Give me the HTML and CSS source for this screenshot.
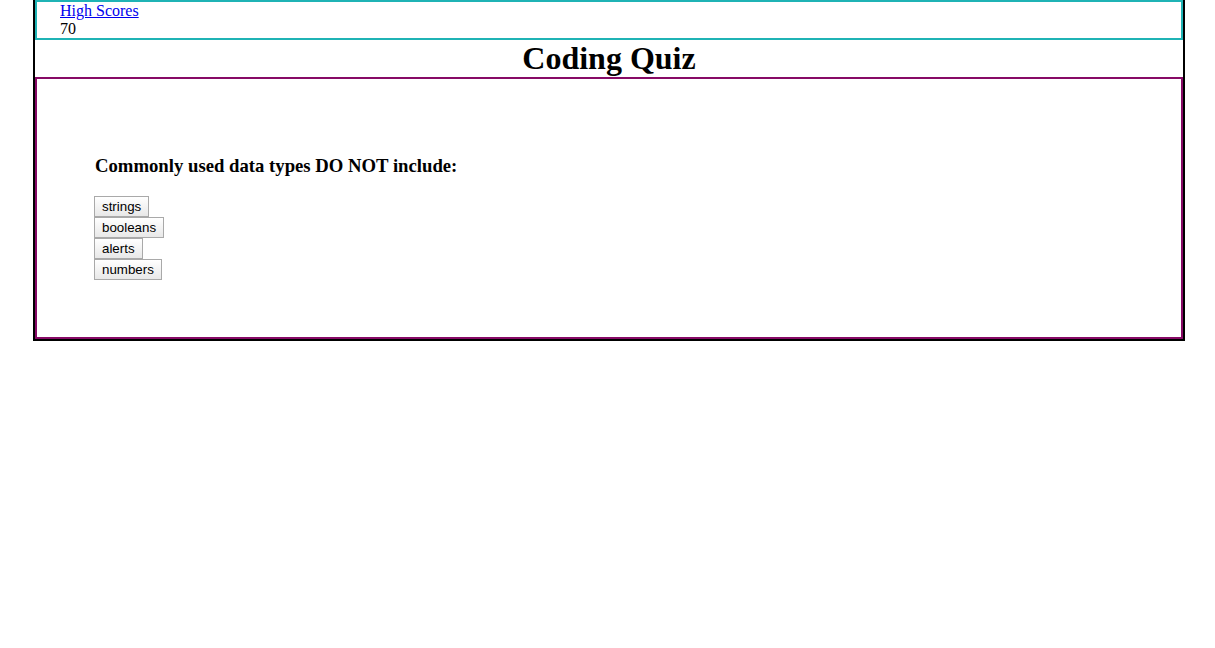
FILE: index.html
```html
<!DOCTYPE html>
<html>
<head>
<meta charset="utf-8">
<title>Coding Quiz</title>
<link rel="stylesheet" href="styles.css">
</head>
<body>
<div class="wrapper">
  <header class="top-bar">
    <a href="#" class="scores-link">High Scores</a>
    <div class="timer">70</div>
  </header>
  <h1 class="title">Coding Quiz</h1>
  <main class="quiz-box">
    <div class="question-area">
      <h3 class="question">Commonly used data types DO NOT include:</h3>
      <div class="choices">
        <button class="choice">strings</button>
        <button class="choice">booleans</button>
        <button class="choice">alerts</button>
        <button class="choice">numbers</button>
      </div>
    </div>
  </main>
</div>
</body>
</html>
```
FILE: styles.css
```css
html, body {
  margin: 0;
  padding: 0;
  background: #fff;
}
body {
  font-family: "Liberation Serif", "Times New Roman", serif;
  font-size: 16px;
  color: #000;
}
.wrapper {
  width: 1148px;
  margin: 0 30px 0 33px;
  border: 2px solid #000;
  border-top: none;
}
.top-bar {
  border: 2px solid #1fb3b5;
  padding-left: 23px;
  line-height: 18px;
}
.scores-link {
  color: #0000ee;
  text-decoration: underline;
}
.timer {
  color: #000;
}
.title {
  margin: 0;
  text-align: center;
  font-size: 32px;
  font-weight: bold;
  line-height: 37px;
}
.quiz-box {
  border: 2px solid #870a66;
}
.question-area {
  padding: 57px;
}
.question {
  margin: 19px 0 20px;
  padding-left: 1px;
  font-size: 18.72px;
  font-weight: bold;
  line-height: 21px;
}
.choices {
  display: flex;
  flex-direction: column;
  align-items: flex-start;
}
.choice {
  appearance: none;
  font-family: "Liberation Sans", Arial, sans-serif;
  font-size: 13.333px;
  line-height: 15px;
  color: #000;
  height: 21px;
  padding: 1px 7px;
  border: 1px solid #a9a9a9;
  border-radius: 0;
  background: linear-gradient(#ffffff, #e8e8e8);
}
```
